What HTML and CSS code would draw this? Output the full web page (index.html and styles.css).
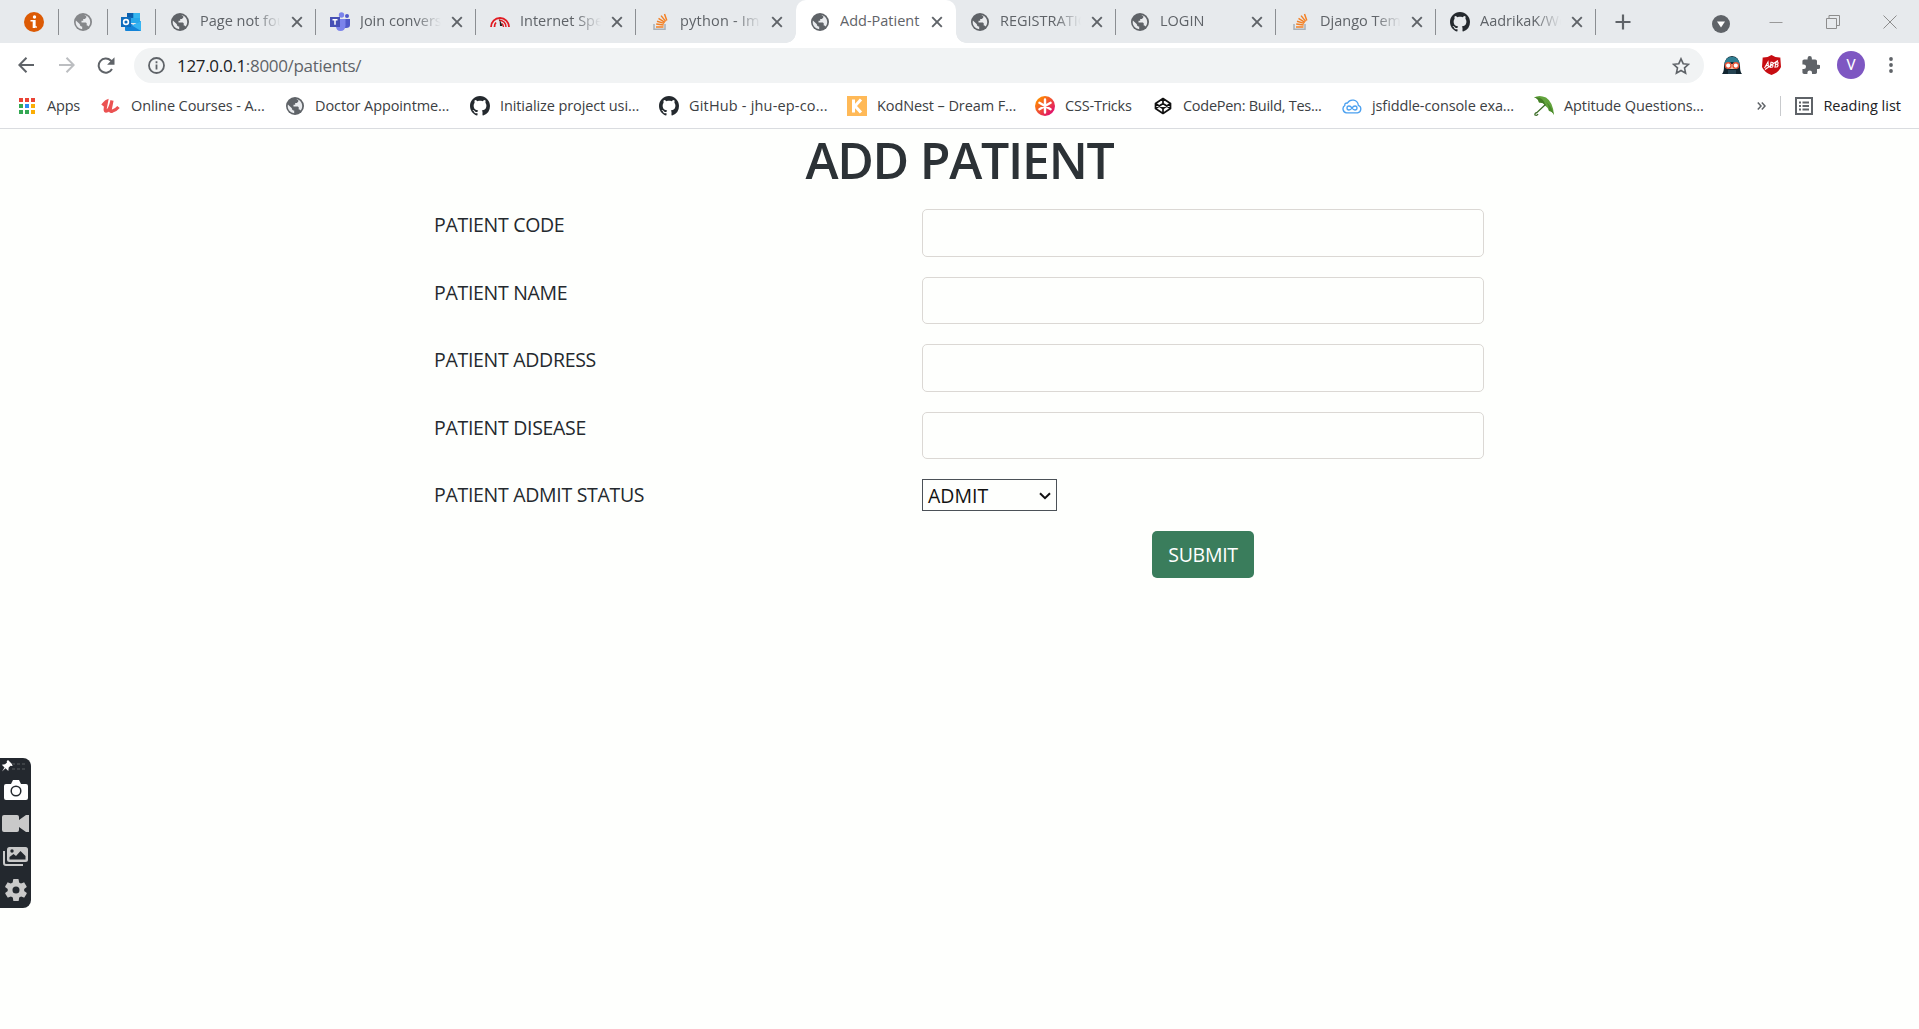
FILE: index.html
```html
<!DOCTYPE html>
<html lang="en">
<head>
<meta charset="utf-8">
<title>Add-Patient</title>
<link rel="stylesheet" href="styles.css">
</head>
<body>
<svg width="0" height="0" class="defs">
  <symbol id="globe" viewBox="0 0 18 18">
    <circle cx="9" cy="9" r="9" fill="currentColor"/>
    <path d="M10.400 1.900C13.800 2.600 16.200 5.400 16.200 9C16.200 10.700 15.600 12.300 14.700 13.500L13.500 12.400H12.700V10.200L11.900 9.400H7.500V7.800H9.200V6.100H10.900L12.300 4.600V3.200ZM1.900 7.500L5.900 11.200V12.200L7.200 13.600H8.200V16.200C3.700 15.700.9 11.800 1.900 7.500Z" fill="#e9ebee"/>
  </symbol>
  <symbol id="github" viewBox="0 0 16 16">
    <path fill="#24292e" d="M8 0C3.580 0 0 3.580 0 8c0 3.540 2.290 6.530 5.470 7.590.4.070.55-.17.55-.38 0-.19-.01-.82-.01-1.490-2.010.37-2.530-.49-2.690-.94-.09-.23-.48-.94-.82-1.130-.28-.15-.68-.52-.01-.53.63-.01 1.080.58 1.230.82.72 1.210 1.870.87 2.330.66.070-.52.28-.87.51-1.070-1.780-.2-3.640-.89-3.640-3.950 0-.87.31-1.590.82-2.150-.08-.2-.36-1.020.08-2.120 0 0 .67-.21 2.200.82.640-.18 1.320-.27 2-.27s1.360.09 2 .27c1.530-1.040 2.200-.82 2.200-.82.440 1.100.160 1.920.080 2.120.51.56.82 1.270.82 2.150 0 3.070-1.870 3.750-3.650 3.950.29.25.54.73.54 1.480 0 1.070-.01 1.930-.01 2.200 0 .21.15.46.55.38A8.010 8.010 0 0 0 16 8c0-4.420-3.580-8-8-8z"/>
  </symbol>
  <symbol id="stack" viewBox="0 0 16 18">
    <path d="M2 11v5.200h11V11" fill="none" stroke="#a9b0b7" stroke-width="1.500"/>
    <path d="M4 14h7.500M4.200 11.100l7.500.9M5 8.200l7.200 2.200M6.500 5.300l6.400 4M9 2.600l4.700 5.800M12.500 1l2.300 6.600" stroke="#f48024" stroke-width="1.500" fill="none"/>
  </symbol>
  <symbol id="close" viewBox="0 0 12 12">
    <path d="M1.200 1.200l9.600 9.600M10.800 1.200l-9.600 9.600" stroke="#5f6368" stroke-width="1.900"/>
  </symbol>
</svg>

<header class="browser">
  <div class="tabs">
    <div class="pin first"><svg width="20" height="20" viewBox="0 0 20 20"><circle cx="10" cy="10" r="10" fill="#dc5a04"/><circle cx="10.500" cy="5" r="1.700" fill="#fff"/><path d="M6.500 8.700h4.300v5.200q0 1.500 2 .8" fill="none" stroke="#fff" stroke-width="1.600"/><path d="M9.900 8v8" stroke="#fff" stroke-width="2.400"/></svg></div>
    <div class="pin"><svg class="faded" width="18" height="18"><use href="#globe"/></svg></div>
    <div class="pin"><svg width="20" height="18" viewBox="0 0 20 18"><path d="M6 0h13v10H6z" fill="#28a8ea"/><path d="M6 0h6.500v5H6z" fill="#0a5fae"/><path d="M12.500 0H19v5h-6.500z" fill="#36b6ef"/><path d="M4 8l8.500 4L20 8v10H5q-1 0-1-1z" fill="#1383d8"/><path d="M20 8v10L11 12.500z" fill="#36b4f2"/><path d="M0 4h10v10H0z" fill="#0f6cbd"/><circle cx="5" cy="9" r="2.400" fill="none" stroke="#fff" stroke-width="1.600"/></svg></div>
    <div class="tab"><svg class="fav" width="18" height="18"><use href="#globe"/></svg><span class="name">Page not found</span><svg class="x" width="12" height="12"><use href="#close"/></svg></div>
    <div class="tab"><svg class="fav" width="20" height="20" viewBox="0 0 20 20"><circle cx="11.500" cy="3" r="2.700" fill="#7b83eb"/><circle cx="17" cy="4" r="2" fill="#5059c9"/><path d="M12 7h8v6q0 3-4 3h-3z" fill="#5059c9"/><path d="M6 7h9.500v7q-.5 5-5 5T6 14z" fill="#7b83eb"/><path d="M0 5h10v10H0z" fill="#4650b5"/><path d="M2.500 7.800h5M5 7.800v5" stroke="#fff" stroke-width="1.500"/></svg><span class="name">Join conversation</span><svg class="x" width="12" height="12"><use href="#close"/></svg></div>
    <div class="tab"><svg class="fav" width="20" height="20" viewBox="0 0 20 20"><path d="M1 15A9 9 0 0 1 19 15M4.500 15A5.500 5.500 0 0 1 6 10.500" fill="none" stroke="#e11b22" stroke-width="1.800"/><path d="M9 8q7 1 7 7M11.500 11.500q2 1 2 3.500" fill="none" stroke="#e11b22" stroke-width="1.400"/><path d="M9.500 7l3 7H10z" fill="#222"/></svg><span class="name">Internet Speed</span><svg class="x" width="12" height="12"><use href="#close"/></svg></div>
    <div class="tab before"><svg class="fav" width="16" height="18"><use href="#stack"/></svg><span class="name wide">python - Import</span><svg class="x" width="12" height="12"><use href="#close"/></svg></div>
    <div class="tab active"><svg class="fav" width="18" height="18"><use href="#globe"/></svg><span class="name">Add-Patient</span><svg class="x" width="12" height="12"><use href="#close"/></svg></div>
    <div class="tab"><svg class="fav" width="18" height="18"><use href="#globe"/></svg><span class="name">REGISTRATION</span><svg class="x" width="12" height="12"><use href="#close"/></svg></div>
    <div class="tab"><svg class="fav" width="18" height="18"><use href="#globe"/></svg><span class="name">LOGIN</span><svg class="x" width="12" height="12"><use href="#close"/></svg></div>
    <div class="tab"><svg class="fav" width="16" height="18"><use href="#stack"/></svg><span class="name">Django Template</span><svg class="x" width="12" height="12"><use href="#close"/></svg></div>
    <div class="tab"><svg class="fav" width="20" height="20"><use href="#github"/></svg><span class="name">AadrikaK/Web</span><svg class="x" width="12" height="12"><use href="#close"/></svg></div>
    <svg class="plus" width="16" height="16" viewBox="0 0 16 16"><path d="M8 .5v15M.5 8h15" stroke="#5f6368" stroke-width="2.200"/></svg>
    <div class="window">
      <svg width="18" height="18" viewBox="0 0 18 18"><circle cx="9" cy="9" r="9" fill="#5f6368"/><path d="M5 6.500h8L9 12.500z" fill="#fff"/></svg>
      <svg width="14" height="14" viewBox="0 0 14 14"><path d="M.5 7.500h13" stroke="#999"/></svg>
      <svg width="14" height="14" viewBox="0 0 14 14"><path d="M.5 3.500h10v10H.5zM3 3.500V.5h10.500v10h-3" fill="none" stroke="#8d8d8d"/></svg>
      <svg width="14" height="14" viewBox="0 0 14 14"><path d="M.5.5l13 13M13.500.5l-13 13" stroke="#8d8d8d"/></svg>
    </div>
  </div>

  <div class="toolbar">
    <svg class="back" width="16" height="16" viewBox="0 0 16 16"><path d="M16 8H1.500M8.500.8L1.300 8l7.200 7.200" fill="none" stroke="#5f6368" stroke-width="2"/></svg>
    <svg class="forward" width="16" height="16" viewBox="0 0 16 16"><path d="M0 8h14.500M7.500.8L14.700 8l-7.200 7.200" fill="none" stroke="#bcbec1" stroke-width="2"/></svg>
    <svg class="reload" width="18" height="17" viewBox="0 0 18 17"><path d="M15 12A7.100 7.100 0 1 1 13.800 3.500l1.800 1.800" fill="none" stroke="#5f6368" stroke-width="2"/><path d="M17.500.3v7.400h-7.400z" fill="#5f6368"/></svg>
    <div class="address">
      <svg width="17" height="17" viewBox="0 0 17 17"><circle cx="8.500" cy="8.500" r="7.500" fill="none" stroke="#5f6368" stroke-width="1.800"/><path d="M8.500 7.500v5M8.500 4.300v1.900" stroke="#5f6368" stroke-width="1.800"/></svg>
      <span class="url"><b>127.0.0.1</b>:8000/patients/</span>
      <svg class="star" width="18" height="18" viewBox="0 0 18 18"><path d="M9 1.800l2.200 4.900 5.300.6-4 3.600 1.100 5.300L9 13.500l-4.600 2.700 1.100-5.300-4-3.600 5.300-.6z" fill="none" stroke="#5f6368" stroke-width="1.600"/></svg>
    </div>
    <svg class="ghost" width="20" height="18" viewBox="0 0 20 18"><path d="M0 18q2-2 2-8Q3 0 10 0t8 10q0 6 2 8z" fill="#10242f"/><path d="M2.500 8Q3.500 .8 10 .8T17.500 8L10 6z" fill="#2f7f93"/><path d="M4.500 8h11l-1 5h-9z" fill="#f2c0a2"/><circle cx="6.200" cy="9.600" r="2.800" fill="#fff" stroke="#e65437" stroke-width="1.400"/><circle cx="13.800" cy="9.600" r="2.800" fill="#fff" stroke="#e65437" stroke-width="1.400"/><path d="M6 14h8v4H6z" fill="#254352"/></svg>
    <svg class="shield" width="19" height="20" viewBox="0 0 19 20"><path d="M9.500 0q4 2.800 8.800 2.600L19 12q-2 5-9.500 8Q2 17 0 12l.7-9.400Q5.500 2.800 9.500 0z" fill="#c70d12"/><path d="M2.500 13l3.500-6 .5 5.500M3.800 11l3-1M8.200 12.300l.8-5q3-.5 1.800 2l-1.800.5q3 0 1.500 2.200zM13 12l1-5q3-.5 1.800 2l-1.600.5q3 0 1.300 2.200zM3 14.500L16 5.500" fill="none" stroke="#fff" stroke-width="1.100"/></svg>
    <svg class="puzzle" width="18" height="19" viewBox="1.500 1 21 22"><path fill="#5f6368" d="M20.500 11H19V7c0-1.100-.9-2-2-2h-4V3.500a2.500 2.500 0 0 0-5 0V5H4c-1.100 0-2 .9-2 2v3.800h1.500a2.700 2.700 0 0 1 0 5.400H2V20c0 1.100.9 2 2 2h3.800v-1.500a2.700 2.700 0 0 1 5.400 0V22H17c1.100 0 2-.9 2-2v-4h1.500a2.500 2.500 0 0 0 0-5z"/></svg>
    <div class="avatar">V</div>
    <svg class="dots" width="4" height="16" viewBox="0 0 4 16"><g fill="#5f6368"><circle cx="2" cy="2" r="1.900"/><circle cx="2" cy="8" r="1.900"/><circle cx="2" cy="14" r="1.900"/></g></svg>
  </div>

  <nav class="bookmarks">
    <a><svg width="20" height="18" viewBox="0 0 20 18"><path d="M2 1h4v4H2zM8 1h4v4H8zM14 1h4v4h-4z" fill="#ea4335"/><path d="M2 7h4v4H2zM2 13h4v4H2z" fill="#34a853"/><path d="M8 7h4v4H8z" fill="#2a8bf2"/><path d="M8 13h4v4H8z" fill="#34a853"/><path d="M14 7h4v4h-4zM14 13h4v4h-4z" fill="#fbad05"/></svg><span>Apps</span></a>
    <a class="loose"><svg width="20" height="18" viewBox="0 0 20 18"><path d="M1.500 8.500q3-3.500 4-4L4.300 11q-.8 4 2 2.800Q9 12 11 3.500L9.500 11q-1 4.500 2 3Q15 13 17.500 10" fill="none" stroke="#eb5252" stroke-width="3.200"/></svg><span>Online Courses - A...</span></a>
    <a class="loose"><svg class="grey" width="20" height="18"><use href="#globe"/></svg><span>Doctor Appointme...</span></a>
    <a class="loose"><svg width="20" height="20"><use href="#github"/></svg><span>Initialize project usi...</span></a>
    <a class="looser"><svg width="20" height="20"><use href="#github"/></svg><span>GitHub - jhu-ep-co...</span></a>
    <a class="loose"><svg width="20" height="20" viewBox="0 0 20 20"><path d="M0 0h20v20H0z" fill="#ffb957"/><path d="M6.500 3.500v13M14 3.500L8 10l6 6.500" fill="none" stroke="#fff" stroke-width="3"/></svg><span>KodNest – Dream F...</span></a>
    <a><svg width="20" height="20" viewBox="0 0 20 20"><defs><linearGradient id="ct" x1="0" y1="0" x2="1" y2="1"><stop offset=".15" stop-color="#ff8a00"/><stop offset=".85" stop-color="#e0116c"/></linearGradient></defs><circle cx="10" cy="10" r="10" fill="url(#ct)"/><path d="M10 3.500v13M4.400 6.800l11.200 6.400M15.600 6.800L4.400 13.200" stroke="#fff" stroke-width="2.400" stroke-linecap="round"/></svg><span>CSS-Tricks</span></a>
    <a class="tight"><svg width="20" height="18" viewBox="0 0 20 18"><path d="M10 1.500l7.500 5v5l-7.500 5-7.500-5v-5zM10 1.500v5M10 11.500v5M2.500 6.500l7.500 5 7.500-5M2.500 11.500l7.500-5 7.500 5" fill="none" stroke="#111" stroke-width="1.700" stroke-linejoin="round"/></svg><span>CodePen: Build, Tes...</span></a>
    <a class="loose"><svg width="20" height="16" viewBox="0 0 20 16"><path d="M4.500 14.800A4 4 0 0 1 2.800 7.500Q2.500 4.800 5.500 5A5.800 5.800 0 0 1 16.300 7.300 3.900 3.900 0 0 1 15.500 14.800z" fill="none" stroke="#4aa0f0" stroke-width="1.300"/><path d="M10 10q-1.300-2-3-2a1.900 1.900 0 0 0 0 4q1.700 0 3-2t3-2a1.900 1.900 0 0 1 0 4q-1.700 0-3-2z" fill="none" stroke="#4aa0f0" stroke-width="1.300"/></svg><span>jsfiddle-console exa...</span></a>
    <a class="loose"><svg width="20" height="20" viewBox="0 0 20 20"><path d="M0 1.500Q5-1.500 12 1.500 19 6 20 19q-2-4-5-4-1-3.500-4-5.500Q9 6 5 6.500 4 2 0 1.500z" fill="#62a33c"/><path d="M5 6.500Q4 2 0 1.500 9 0 11.500 9.500 9 6 5 6.500z" fill="#437e26"/><path d="M15 15q0-6-3-9 6 4 8 13-2-4-5-4z" fill="#4a8a2b"/><path d="M11.500 8.500L3 16.500q-2.500.5-2 2.500 2 1 3-1" fill="none" stroke="#3c6d27" stroke-width="1.300"/></svg><span>Aptitude Questions...</span></a>
    <div class="more"><svg width="9" height="8" viewBox="0 0 9 8"><path d="M.8.5L4 4 .8 7.500M4.800.5L8 4 4.800 7.500" fill="none" stroke="#5f6368" stroke-width="1.500"/></svg></div>
    <div class="reading"><svg width="18" height="18" viewBox="0 0 18 18"><path d="M1 1h16v16H1z" fill="none" stroke="#5f6368" stroke-width="2"/><path d="M4 5.500h2M4 9h2M4 12.500h2M7.500 5.500H14M7.500 9H14M7.500 12.500H14" stroke="#5f6368" stroke-width="1.800"/></svg><span>Reading list</span></div>
  </nav>
</header>

<main class="page">
  <h1>ADD PATIENT</h1>
  <form class="form">
    <div class="row"><label for="code">PATIENT CODE</label><input id="code" type="text"></div>
    <div class="row"><label for="name">PATIENT NAME</label><input id="name" type="text"></div>
    <div class="row"><label for="address">PATIENT ADDRESS</label><input id="address" type="text"></div>
    <div class="row"><label for="disease">PATIENT DISEASE</label><input id="disease" type="text"></div>
    <div class="row status"><label for="status">PATIENT ADMIT STATUS</label>
      <div class="select" id="status"><span>ADMIT</span><svg width="12" height="8" viewBox="0 0 12 8"><path d="M1 1.200l5 5 5-5" fill="none" stroke="#111" stroke-width="2"/></svg></div>
    </div>
    <div class="row"><div class="actions"><button type="button">SUBMIT</button></div></div>
  </form>
</main>

<aside class="recorder">
  <svg class="pinned" width="30" height="14" viewBox="0 0 30 14"><path d="M7 1l5 5-1.200 1-1.300-.3-1.800 1.800L7.300 12 4.500 9.200 1 12.500l2.500-4L.8 5.800l3.200-.5L6 3.500 5.700 2.200z" fill="#fff"/><path d="M11 5h3M16 5h3M21 5h3M11 10h3M16 10h3M21 10h3" stroke="#3d4246" stroke-width="2"/></svg>
  <svg width="24" height="20" viewBox="0 0 24 20"><path d="M2 4h5l2-4h6l2 4h5q2 0 2 2v12q0 2-2 2H2q-2 0-2-2V6q0-2 2-2z" fill="#fff"/><circle cx="12" cy="11" r="4.800" fill="none" stroke="#23282e" stroke-width="1.500"/></svg>
  <svg width="27" height="17" viewBox="0 0 27 17"><path d="M2 0h13q2 0 2 2v3l7-5h3v17h-3l-7-5v3q0 2-2 2H2q-2 0-2-2V2q0-2 2-2z" fill="#c9c9c9"/></svg>
  <svg width="25" height="19" viewBox="0 0 25 19"><path d="M1 4v12q0 2 2 2h17" fill="none" stroke="#c9c9c9" stroke-width="2"/><rect x="4" y="0" width="21" height="15" rx="2.500" fill="#c9c9c9"/><path d="M6.500 12.500V10l4-3 2.500 2 4.500-5 5 5v3.500z" fill="#23282e"/><circle cx="9" cy="4" r="1.700" fill="#23282e"/></svg>
  <svg width="22" height="22" viewBox="2 2 20 20"><path fill="#c9c9c9" d="M19.400 13l.1-1-.1-1 2.100-1.600c.2-.2.3-.4.1-.7l-2-3.400c-.1-.2-.4-.3-.6-.2l-2.500 1-1.700-1-.4-2.600c0-.3-.2-.5-.5-.5h-4c-.3 0-.5.2-.5.5L9 5.100l-1.700 1-2.500-1c-.2-.1-.5 0-.6.200l-2 3.400c-.1.300 0 .5.100.700L4.500 11l-.1 1 .1 1-2.100 1.600c-.2.200-.2.400-.1.700l2 3.400c.1.200.4.300.6.200l2.500-1 1.700 1 .4 2.600c0 .3.200.5.500.5h4c.3 0 .5-.2.500-.5l.4-2.600 1.700-1 2.500 1c.2.100.5 0 .6-.2l2-3.400c.1-.3 0-.5-.1-.7zM12 15.200a3.200 3.200 0 1 1 0-6.400 3.200 3.200 0 0 1 0 6.400z"/></svg>
</aside>
</body>
</html>
```
FILE: styles.css
```css
* { box-sizing: border-box; }
body {
  margin: 0;
  height: 1029px;
  overflow: hidden;
  background: #fefffd;
  color: #24292e;
  font-family: "Open Sans", "Noto Sans", sans-serif;
}
svg { display: block; flex: none; }
.defs { position: absolute; }

/* Tab strip */
.tabs { display: flex; align-items: center; height: 43px; background: #e7eaed; }
.pin, .tab { display: flex; align-items: center; height: 43px; position: relative; flex: none; color: #5f6368; }
.pin { width: 49px; justify-content: center; padding-right: 2px; }
.pin.first { width: 59px; padding: 0 0 0 9px; }
.pin:nth-child(3) { width: 48px; }
.faded { color: #85878a; }
.pin::after, .tab::after {
  content: "";
  position: absolute;
  right: 0;
  top: 9px;
  width: 1px;
  height: 26px;
  background: #8b8e92;
}
.tab { width: 160px; padding-left: 14px; }
.tab .fav { width: 20px; margin-right: 10px; }
.name {
  width: 82px;
  height: 24px;
  overflow: hidden;
  white-space: nowrap;
  font-size: 14.500px;
  line-height: 22px;
  letter-spacing: 0;
  -webkit-mask-image: linear-gradient(90deg, #000 55px, transparent 81px);
  mask-image: linear-gradient(90deg, #000 55px, transparent 81px);
}
.active .name { -webkit-mask-image: none; mask-image: none; }
.name.wide { letter-spacing: 0.200px; }
.tab .x { margin-left: 9px; }
.tab.active { background: #fff; border-radius: 10px 10px 0 0; }
.before::after, .active::after { display: none; }
.active::before {
  content: "";
  position: absolute;
  left: -10px;
  right: -10px;
  bottom: 0;
  height: 10px;
  background:
    radial-gradient(circle at 0 0, transparent 9.500px, #fff 10px) left / 10px 10px no-repeat,
    radial-gradient(circle at 100% 0, transparent 9.500px, #fff 10px) right / 10px 10px no-repeat;
}
.plus { margin-left: 19px; }
.window { display: flex; align-items: center; margin-left: auto; padding-right: 22px; gap: 43px; height: 38px; }
.window svg:first-child { margin: 5px -4px 0 0; }
.window svg:first-child { align-self: flex-start; margin-top: 12px; }

/* Navigation row */
.toolbar { display: flex; align-items: center; height: 45px; background: #fff; padding: 0 26px 1px 18px; }
.forward { margin-left: 25px; }
.reload { margin-left: 22px; }
.address {
  display: flex;
  align-items: center;
  flex: none;
  width: 1570px;
  height: 35px;
  margin: 1px 18px 0 19px;
  padding: 0 14px 0 14px;
  border-radius: 18px;
  background: #f1f3f4;
}
.url { margin-left: 12px; font-size: 17px; color: #5f6368; line-height: 24px; letter-spacing: -0.320px; }
.url b { font-weight: 400; color: #202124; }
.star { margin-left: auto; }
.shield { margin-left: 20px; }
.puzzle { margin-left: 21px; }
.avatar {
  width: 28px;
  height: 28px;
  margin: 0 24px 0 17px;
  border-radius: 50%;
  background: #7e57c2;
  color: #fff;
  font: 15px/28px Roboto, sans-serif;
  text-align: center;
}

/* Bookmarks */
.bookmarks {
  display: grid;
  grid-template-columns: 84px 184px 185px 189px 188px 188px 118px 189px 192px 170px 1fr auto;
  height: 41px;
  padding: 0 18px 5px 17px;
  background: #fff;
  border-bottom: 1px solid #dadce0;
  font-size: 14.500px;
  color: #3c4043;
}
.bookmarks a, .reading { display: flex; align-items: center; gap: 10px; white-space: nowrap; letter-spacing: -0.200px; }
.bookmarks .tight { letter-spacing: -0.280px; }
.bookmarks .loose { letter-spacing: -0.100px; }
.bookmarks .looser { letter-spacing: 0.180px; }
.grey { color: #5f6368; }
.more { display: flex; align-items: center; justify-content: flex-end; padding-right: 14px; }
.reading { align-self: center; height: 20px; padding-left: 14px; border-left: 1px solid #c8cacd; color: #202124; }
.bookmarks .reading { letter-spacing: 0; }

/* Form page */
.page { display: flex; flex-direction: column; align-items: center; }
h1 { margin: 1px 0 19px; font-size: 50px; font-weight: 600; line-height: 60px; letter-spacing: -1.250px; color: #2c3236; }
.form { width: 1049px; display: flex; flex-direction: column; gap: 20px; }
.row { display: grid; grid-template-columns: 487px 562px; }
label { font-size: 19.500px; line-height: 30px; letter-spacing: -0.300px; margin: 1px 0 0 -1px; }
input { width: 562px; height: 47.600px; border: 1px solid #dbd8d4; border-radius: 5px; background: #fefffd; padding: 7px 15px; font: inherit; }
.select {
  display: flex;
  align-items: center;
  justify-content: space-between;
  width: 135px;
  height: 32px;
  padding: 1px 5px 0 5px;
  border: 1px solid #4b5157;
  font-size: 19.500px;
  color: #111;
}
.actions { grid-column: 2; display: flex; justify-content: center; }
button {
  width: 102px;
  height: 47px;
  border: 0;
  border-radius: 5px;
  background: #3a7d5c;
  color: #fff;
  font: 19.500px "Open Sans", sans-serif;
  letter-spacing: -0.300px;
  padding: 0;
}

/* Screen recorder dock, floating over the page */
.recorder {
  position: absolute;
  left: 0;
  top: 758px;
  width: 31px;
  height: 150px;
  padding: 1px 0 0;
  border-radius: 0 8px 8px 0;
  background: #23282e;
  display: flex;
  flex-direction: column;
  align-items: center;
  gap: 15px;
}
.recorder .pinned { margin-bottom: -8px; }
.recorder svg:last-child { margin-top: -2px; }
```
